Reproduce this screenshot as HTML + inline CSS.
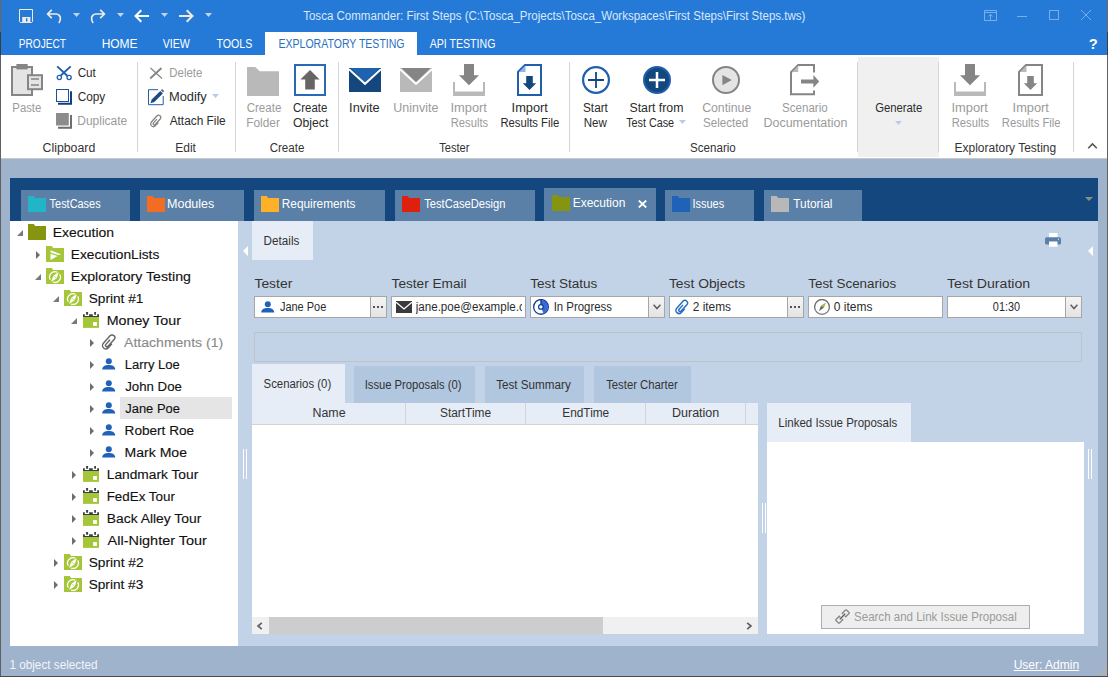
<!DOCTYPE html>
<html lang="en"><head><meta charset="utf-8"><title>Tosca Commander: First Steps</title>
<style>
html,body{margin:0;padding:0}
body{width:1108px;height:677px;position:relative;overflow:hidden;background:#a0b3cc;font-family:"Liberation Sans", sans-serif;}
#app div,#app span,#app svg{position:absolute;display:block}
#app span{white-space:pre}
</style></head>
<body><div id="app">
<div style="left:0px;top:0px;width:1108px;height:55px;background:#257ad8;"></div>
<div style="left:265px;top:32px;width:152px;height:23px;background:#fff;"></div>
<div style="left:0px;top:55px;width:1108px;height:103px;background:#fff;"></div>
<div style="left:0px;top:158px;width:1108px;height:1px;background:#c6c8cb;"></div>
<span style="left:303px;top:7.8px;font-size:12px;line-height:16px;transform:translateX(0.19px) scaleX(0.961);transform-origin:0 0;color:#dbe8f8;">Tosca Commander: First Steps (C:\Tosca_Projects\Tosca_Workspaces\First Steps\First Steps.tws)</span>
<span style="left:18px;top:35.8px;font-size:12px;line-height:16px;transform:translateX(0.80px) scaleX(0.842);transform-origin:0 0;color:#fff;">PROJECT</span>
<span style="left:101px;top:35.8px;font-size:12px;line-height:16px;transform:translateX(0.63px) scaleX(0.999);transform-origin:0 0;color:#fff;">HOME</span>
<span style="left:162px;top:35.8px;font-size:12px;line-height:16px;transform:translateX(0.66px) scaleX(0.889);transform-origin:0 0;color:#fff;">VIEW</span>
<span style="left:216px;top:35.8px;font-size:12px;line-height:16px;transform:translateX(0.40px) scaleX(0.886);transform-origin:0 0;color:#fff;">TOOLS</span>
<span style="left:278px;top:35.8px;font-size:12px;line-height:16px;transform:translateX(0.47px) scaleX(0.878);transform-origin:0 0;color:#2a6fc0;">EXPLORATORY TESTING</span>
<span style="left:429px;top:35.8px;font-size:12px;line-height:16px;transform:translateX(0.67px) scaleX(0.883);transform-origin:0 0;color:#fff;">API TESTING</span>
<span style="left:1088px;top:35.3px;font-size:14px;line-height:18px;font-weight:700;transform:translateX(0.77px) scaleX(1.049);transform-origin:0 0;color:#fff;">?</span>
<svg style="left:18px;top:8px;" width="16" height="16" viewBox="0 0 16 16"><path d="M1.5 1.5h13v12.2l-.8.8H2.3l-.8-.8z" fill="none" stroke="#efeae2" stroke-width="1"/><path d="M4.2 9h8.2v5.5H4.2z" fill="#efeae2"/><rect x="8" y="10.2" width="1.4" height="3.3" fill="#257ad8"/></svg>
<svg style="left:46px;top:8px;" width="16" height="16" viewBox="0 0 16 16"><path d="M5.8 1.8L1.6 6l4.2 4.2M1.8 6h8.4a4.4 4.4 0 0 1 4.2 4.6c0 1.8-.6 3.2-1.6 4.4" fill="none" stroke="#efeae2" stroke-width="1.7"/></svg>
<svg style="left:73px;top:13px;" width="7" height="4" viewBox="0 0 7 4"><path d="M0 0h7l-3.5 4z" fill="#c5d3e8"/></svg>
<svg style="left:90px;top:8px;" width="16" height="16" viewBox="0 0 16 16"><path d="M10.2 1.8L14.4 6l-4.2 4.2M14.2 6H5.8a4.4 4.4 0 0 0-4.2 4.6c0 1.8.6 3.2 1.6 4.4" fill="none" stroke="#efeae2" stroke-width="1.7"/></svg>
<svg style="left:117px;top:13px;" width="7" height="4" viewBox="0 0 7 4"><path d="M0 0h7l-3.5 4z" fill="#c5d3e8"/></svg>
<svg style="left:134px;top:8px;" width="16" height="16" viewBox="0 0 16 16"><path d="M7.3 2.2L1.5 8l5.8 5.800M1.8 8H15" fill="none" stroke="#fff" stroke-width="2"/></svg>
<svg style="left:161px;top:13px;" width="7" height="4" viewBox="0 0 7 4"><path d="M0 0h7l-3.5 4z" fill="#c5d3e8"/></svg>
<svg style="left:178px;top:8px;" width="16" height="16" viewBox="0 0 16 16"><path d="M8.700 2.2L14.5 8l-5.800 5.800M14.2 8H1" fill="none" stroke="#efe9e1" stroke-width="2"/></svg>
<svg style="left:205px;top:13px;" width="7" height="4" viewBox="0 0 7 4"><path d="M0 0h7l-3.5 4z" fill="#c5d3e8"/></svg>
<svg style="left:984px;top:10px;" width="13" height="11" viewBox="0 0 13 11"><path d="M.5.5h12v10H.5zM.5 2.500h12M6.500 4.500v6M4.300 6.500l2.200-2.200 2.200 2.200" fill="none" stroke="#79afe9" stroke-width="1"/></svg>
<div style="left:1017px;top:16px;width:10px;height:1px;background:#79afe9;"></div>
<svg style="left:1049px;top:10px;" width="10" height="10" viewBox="0 0 10 10"><rect x=".5" y=".5" width="9" height="9" fill="none" stroke="#79afe9"/></svg>
<svg style="left:1081px;top:10px;" width="10" height="10" viewBox="0 0 10 10"><path d="M0 0l10 10M10 0L0 10" stroke="#79afe9" stroke-width="1" fill="none"/></svg>
<div style="left:858px;top:57px;width:81px;height:100px;background:#f0f0f0;"></div>
<div style="left:137px;top:62px;width:1px;height:90px;background:#d6d6d6;"></div>
<div style="left:235px;top:62px;width:1px;height:90px;background:#d6d6d6;"></div>
<div style="left:338px;top:62px;width:1px;height:90px;background:#d6d6d6;"></div>
<div style="left:569px;top:62px;width:1px;height:90px;background:#d6d6d6;"></div>
<div style="left:857px;top:62px;width:1px;height:90px;background:#d6d6d6;"></div>
<div style="left:938px;top:62px;width:1px;height:90px;background:#d6d6d6;"></div>
<div style="left:1073px;top:62px;width:1px;height:90px;background:#d6d6d6;"></div>
<span style="left:12px;top:99.8px;font-size:12px;line-height:16px;transform:translateX(0.35px) scaleX(0.943);transform-origin:0 0;color:#9b9b9b;">Paste</span>
<span style="left:77px;top:64.8px;font-size:12px;line-height:16px;transform:translateX(0.63px) scaleX(0.977);transform-origin:0 0;color:#2b2b2b;">Cut</span>
<span style="left:77px;top:88.8px;font-size:12px;line-height:16px;transform:translateX(0.63px) scaleX(0.985);transform-origin:0 0;color:#2b2b2b;">Copy</span>
<span style="left:77px;top:112.8px;font-size:12px;line-height:16px;transform:translateX(0.28px) scaleX(0.999);transform-origin:0 0;color:#9b9b9b;">Duplicate</span>
<span style="left:42px;top:139.8px;font-size:12px;line-height:16px;transform:translateX(0.58px) scaleX(1.025);transform-origin:0 0;color:#333;">Clipboard</span>
<span style="left:169px;top:64.8px;font-size:12px;line-height:16px;transform:translateX(0.35px) scaleX(0.949);transform-origin:0 0;color:#9b9b9b;">Delete</span>
<span style="left:168px;top:88.8px;font-size:12px;line-height:16px;transform:translateX(0.92px) scaleX(1.071);transform-origin:0 0;color:#2b2b2b;">Modify</span>
<span style="left:169px;top:112.8px;font-size:12px;line-height:16px;transform:translateX(0.67px) scaleX(0.987);transform-origin:0 0;color:#2b2b2b;">Attach File</span>
<span style="left:175px;top:139.8px;font-size:12px;line-height:16px;transform:translateX(0.28px) scaleX(1.000);transform-origin:0 0;color:#333;">Edit</span>
<span style="left:246px;top:99.8px;font-size:12px;line-height:16px;transform:translateX(0.64px) scaleX(0.963);transform-origin:0 0;color:#9b9b9b;">Create</span>
<span style="left:246px;top:114.8px;font-size:12px;line-height:16px;transform:translateX(0.29px) scaleX(0.986);transform-origin:0 0;color:#9b9b9b;">Folder</span>
<span style="left:293px;top:99.8px;font-size:12px;line-height:16px;transform:translateX(0.04px) scaleX(0.950);transform-origin:0 0;color:#2b2b2b;">Create</span>
<span style="left:293px;top:114.8px;font-size:12px;line-height:16px;transform:translateX(0.06px) scaleX(1.016);transform-origin:0 0;color:#2b2b2b;">Object</span>
<span style="left:269px;top:139.8px;font-size:12px;line-height:16px;transform:translateX(0.64px) scaleX(0.963);transform-origin:0 0;color:#333;">Create</span>
<span style="left:349px;top:99.8px;font-size:12px;line-height:16px;transform:translateX(0.10px) scaleX(1.067);transform-origin:0 0;color:#2b2b2b;">Invite</span>
<span style="left:393px;top:99.8px;font-size:12px;line-height:16px;transform:translateX(0.31px) scaleX(1.041);transform-origin:0 0;color:#9b9b9b;">Uninvite</span>
<span style="left:450px;top:99.8px;font-size:12px;line-height:16px;transform:translateX(0.51px) scaleX(1.071);transform-origin:0 0;color:#9b9b9b;">Import</span>
<span style="left:450px;top:114.8px;font-size:12px;line-height:16px;transform:translateX(0.77px) scaleX(0.935);transform-origin:0 0;color:#9b9b9b;">Results</span>
<span style="left:511px;top:99.8px;font-size:12px;line-height:16px;transform:translateX(0.59px) scaleX(1.067);transform-origin:0 0;color:#2b2b2b;">Import</span>
<span style="left:500px;top:114.8px;font-size:12px;line-height:16px;transform:translateX(0.38px) scaleX(0.939);transform-origin:0 0;color:#2b2b2b;">Results File</span>
<span style="left:439px;top:139.8px;font-size:12px;line-height:16px;transform:translateX(0.18px) scaleX(0.923);transform-origin:0 0;color:#333;">Tester</span>
<span style="left:583px;top:99.8px;font-size:12px;line-height:16px;transform:translateX(0.00px) scaleX(0.982);transform-origin:0 0;color:#2b2b2b;">Start</span>
<span style="left:583px;top:114.8px;font-size:12px;line-height:16px;transform:translateX(0.69px) scaleX(0.962);transform-origin:0 0;color:#2b2b2b;">New</span>
<span style="left:629px;top:99.8px;font-size:12px;line-height:16px;transform:translateX(0.44px) scaleX(1.025);transform-origin:0 0;color:#2b2b2b;">Start from</span>
<span style="left:626px;top:114.8px;font-size:12px;line-height:16px;transform:translateX(0.18px) scaleX(0.898);transform-origin:0 0;color:#2b2b2b;">Test Case</span>
<span style="left:702px;top:99.8px;font-size:12px;line-height:16px;transform:translateX(0.17px) scaleX(1.022);transform-origin:0 0;color:#9b9b9b;">Continue</span>
<span style="left:703px;top:114.8px;font-size:12px;line-height:16px;transform:translateX(0.04px) scaleX(0.968);transform-origin:0 0;color:#9b9b9b;">Selected</span>
<span style="left:782px;top:99.8px;font-size:12px;line-height:16px;transform:translateX(0.04px) scaleX(0.963);transform-origin:0 0;color:#9b9b9b;">Scenario</span>
<span style="left:763px;top:114.8px;font-size:12px;line-height:16px;transform:translateX(0.49px) scaleX(1.040);transform-origin:0 0;color:#9b9b9b;">Documentation</span>
<span style="left:690px;top:139.8px;font-size:12px;line-height:16px;transform:translateX(0.04px) scaleX(0.966);transform-origin:0 0;color:#333;">Scenario</span>
<span style="left:875px;top:99.8px;font-size:12px;line-height:16px;transform:translateX(0.13px) scaleX(0.942);transform-origin:0 0;color:#2b2b2b;">Generate</span>
<span style="left:951px;top:99.8px;font-size:12px;line-height:16px;transform:translateX(0.51px) scaleX(1.071);transform-origin:0 0;color:#9b9b9b;">Import</span>
<span style="left:951px;top:114.8px;font-size:12px;line-height:16px;transform:translateX(0.77px) scaleX(0.933);transform-origin:0 0;color:#9b9b9b;">Results</span>
<span style="left:1012px;top:99.8px;font-size:12px;line-height:16px;transform:translateX(0.59px) scaleX(1.067);transform-origin:0 0;color:#9b9b9b;">Import</span>
<span style="left:1001px;top:114.8px;font-size:12px;line-height:16px;transform:translateX(0.77px) scaleX(0.939);transform-origin:0 0;color:#9b9b9b;">Results File</span>
<span style="left:954px;top:139.8px;font-size:12px;line-height:16px;transform:translateX(0.54px) scaleX(0.998);transform-origin:0 0;color:#333;">Exploratory Testing</span>
<svg style="left:11px;top:64px;" width="32" height="32" viewBox="0 0 32 32"><rect x="1" y="3" width="20" height="28" fill="#e4e4e4" stroke="#858585" stroke-width="2"/><rect x="5.400" y="0" width="11.200" height="5.400" fill="#858585"/><rect x="17" y="11.200" width="14" height="14" fill="#e4e4e4" stroke="#858585" stroke-width="2"/><path d="M20 15h8M20 21h8" stroke="#858585" stroke-width="1.700"/></svg>
<svg style="left:55px;top:65px;" width="18" height="17" viewBox="0 0 18 17"><path d="M2.200 1.400L12.500 11M15.700 1.400L5.800 10.500" stroke="#1f5fae" stroke-width="1.900" fill="none"/><circle cx="4.300" cy="12.500" r="2.100" fill="none" stroke="#1f5fae" stroke-width="1.300"/><circle cx="14.100" cy="12.500" r="2.100" fill="none" stroke="#1f5fae" stroke-width="1.300"/></svg>
<svg style="left:56px;top:89px;" width="17" height="16" viewBox="0 0 17 16"><rect x=".5" y=".5" width="12" height="12" fill="#fff" stroke="#1f4f99"/><path d="M15 2.300V14.800H2" fill="none" stroke="#0f3f7f" stroke-width="2"/></svg>
<svg style="left:56px;top:113px;" width="17" height="16" viewBox="0 0 17 16"><rect x="0" y="0" width="12.800" height="12.500" fill="#8c8c8c"/><path d="M15 2.100V14.800H2" fill="none" stroke="#6e6e6e" stroke-width="2"/></svg>
<svg style="left:149px;top:67px;" width="14" height="13" viewBox="0 0 14 13"><path d="M1.500 1L13 11.500" stroke="#858585" stroke-width="1.200"/><path d="M12.500 1L1.200 11.500" stroke="#858585" stroke-width="1.900"/></svg>
<svg style="left:147px;top:88px;" width="18" height="18" viewBox="0 0 18 18"><path d="M11 1.700H1.500v15h14.700V8" fill="none" stroke="#1f5fae" stroke-width="1"/><path d="M3.500 15.300l1.200-3.800 8.600-8.600 2.600 2.600-8.600 8.600z" fill="#1a4a86"/><path d="M13.800 2.200l1.300-1.300 2.200 2.200-1.300 1.300z" fill="#6a6a6a"/></svg>
<svg style="left:212px;top:94px;" width="7" height="4" viewBox="0 0 7 4"><path d="M0 0h7l-3.5 4z" fill="#b8cce8"/></svg>
<svg style="left:148px;top:113px;" width="16" height="16" viewBox="0 0 16 16"><g transform="translate(8 8) scale(0.98) rotate(42) translate(-2.800 -7)" fill="none" stroke="#858585" stroke-width="1.3"><path d="M5.600 6.500v4.400a2.800 2.800 0 0 1-5.600 0V2.600a2.300 2.300 0 0 1 4.600 0v7.600a1.200 1.200 0 0 1-2.400 0V5"/></g></svg>
<svg style="left:247px;top:67px;" width="32" height="29" viewBox="0 0 32 29"><path d="M0 0h8.200l4.500 4.200H32V29H0z" fill="#b9b9b9"/></svg>
<svg style="left:294px;top:64px;" width="32" height="32" viewBox="0 0 32 32"><rect x="1" y="1" width="30" height="30" fill="#fff" stroke="#2a68b8" stroke-width="2"/><path d="M16 6l9.600 9.500h-4.800v10.100h-9.600V15.500H6.400z" fill="#666"/></svg>
<svg style="left:349px;top:68px;" width="32" height="24" viewBox="0 0 32 24"><rect width="32" height="24" fill="#15477f"/><path d="M1.500 0H30.5L16.0 14.16z" fill="#1f62b0"/><path d="M0 1.200L16.0 15.84 32 1.200" fill="none" stroke="#fff" stroke-width="2.0"/></svg>
<svg style="left:400px;top:68px;" width="32" height="24" viewBox="0 0 32 24"><rect width="32" height="24" fill="#b9b9b9"/><path d="M1.500 0H30.5L16.0 14.16z" fill="#858585"/><path d="M0 1.200L16.0 15.84 32 1.200" fill="none" stroke="#fff" stroke-width="2.0"/></svg>
<svg style="left:453px;top:64px;" width="32" height="32" viewBox="0 0 32 32"><path d="M0 18h2v9.500h28V18h2v14H0z" fill="#b9b9b9"/><path d="M11 0h10v11.300h5L16 21.300 6 11.300h5z" fill="#858585"/></svg>
<svg style="left:517px;top:64px;" width="25" height="32" viewBox="0 0 25 32"><path d="M8 1H24v30H1V8z" fill="#fff" stroke="#1f5fae" stroke-width="2"/><path d="M2 8h6.500V1.500z" fill="#8fb8e8"/><path d="M9.200 12h6.600v7.300h3.400l-6.700 6.700-6.700-6.700h3.400z" fill="#15477f"/></svg>
<svg style="left:582px;top:66px;" width="28" height="28" viewBox="0 0 28 28"><circle cx="14" cy="14" r="12.900" fill="#fff" stroke="#1f5fae" stroke-width="2.200"/><path d="M6 14h16M14 6v16" stroke="#15477f" stroke-width="1.800"/></svg>
<svg style="left:643px;top:66px;" width="28" height="28" viewBox="0 0 28 28"><circle cx="14" cy="14" r="13" fill="#15477f" stroke="#1f5fae" stroke-width="2"/><path d="M6 14h16M14 6v16" stroke="#fff" stroke-width="2.500"/></svg>
<svg style="left:679px;top:120px;" width="7" height="4" viewBox="0 0 7 4"><path d="M0 0h7l-3.5 4z" fill="#b8cce8"/></svg>
<svg style="left:712px;top:66px;" width="28" height="28" viewBox="0 0 28 28"><circle cx="14" cy="14" r="13" fill="#e4e4e4" stroke="#858585" stroke-width="2"/><path d="M10.400 9v10.200l9.400-5.100z" fill="#858585"/></svg>
<svg style="left:790px;top:64px;" width="30" height="32" viewBox="0 0 30 32"><path d="M24 8.400V1H8.200L1 8.200V30.300H24V26.500" fill="none" stroke="#858585" stroke-width="2"/><path d="M2 8h6.200V1.800z" fill="#b9b9b9"/><path d="M11 15.400h12.400V11l5.800 6.400-5.800 6.300v-4.100H11z" fill="#858585"/></svg>
<svg style="left:895px;top:121px;" width="7" height="4" viewBox="0 0 7 4"><path d="M0 0h7l-3.5 4z" fill="#b8cce8"/></svg>
<svg style="left:954px;top:64px;" width="32" height="32" viewBox="0 0 32 32"><path d="M0 18h2v9.500h28V18h2v14H0z" fill="#b9b9b9"/><path d="M11 0h10v11.300h5L16 21.300 6 11.300h5z" fill="#858585"/></svg>
<svg style="left:1018px;top:64px;" width="25" height="32" viewBox="0 0 25 32"><path d="M8 1H24v30H1V8z" fill="#fff" stroke="#858585" stroke-width="2"/><path d="M2 8h6.500V1.500z" fill="#b9b9b9"/><path d="M9.200 12h6.600v7.300h3.400l-6.700 6.700-6.700-6.700h3.400z" fill="#858585"/></svg>
<svg style="left:1087px;top:142px;" width="11" height="8" viewBox="0 0 11 8"><path d="M1.200 6.300L5.500 2l4.300 4.300" fill="none" stroke="#555" stroke-width="1.600"/></svg>
<div style="left:10px;top:178px;width:1088px;height:43px;background:#15477f;"></div>
<div style="left:21px;top:190px;width:109px;height:31px;background:#5a80a8;"></div>
<svg style="left:28px;top:196px;" width="18" height="16" viewBox="0 0 18 16"><path d="M0 0h5.700l1.500 2H18v14H0z" fill="#22b5c8"/></svg>
<span style="left:49px;top:195.8px;font-size:12px;line-height:16px;transform:translateX(0.61px) scaleX(0.910);transform-origin:0 0;color:#fff;">TestCases</span>
<div style="left:140px;top:190px;width:104px;height:31px;background:#5a80a8;"></div>
<svg style="left:147px;top:196px;" width="18" height="16" viewBox="0 0 18 16"><path d="M0 0h5.700l1.500 2H18v14H0z" fill="#f26d21"/></svg>
<span style="left:166px;top:195.8px;font-size:12px;line-height:16px;transform:translateX(0.97px) scaleX(1.045);transform-origin:0 0;color:#fff;">Modules</span>
<div style="left:254px;top:190px;width:131px;height:31px;background:#5a80a8;"></div>
<svg style="left:261px;top:196px;" width="18" height="16" viewBox="0 0 18 16"><path d="M0 0h5.700l1.500 2H18v14H0z" fill="#fdb128"/></svg>
<span style="left:281px;top:195.8px;font-size:12px;line-height:16px;transform:translateX(0.84px) scaleX(0.984);transform-origin:0 0;color:#fff;">Requirements</span>
<div style="left:395px;top:190px;width:140px;height:31px;background:#5a80a8;"></div>
<svg style="left:402px;top:196px;" width="18" height="16" viewBox="0 0 18 16"><path d="M0 0h5.700l1.500 2H18v14H0z" fill="#e0200f"/></svg>
<span style="left:424px;top:195.8px;font-size:12px;line-height:16px;transform:translateX(0.18px) scaleX(0.931);transform-origin:0 0;color:#fff;">TestCaseDesign</span>
<div style="left:665px;top:190px;width:89px;height:31px;background:#5a80a8;"></div>
<svg style="left:672px;top:196px;" width="18" height="16" viewBox="0 0 18 16"><path d="M0 0h5.700l1.500 2H18v14H0z" fill="#1f62b8"/></svg>
<span style="left:692px;top:195.8px;font-size:12px;line-height:16px;transform:translateX(0.42px) scaleX(0.917);transform-origin:0 0;color:#fff;">Issues</span>
<div style="left:764px;top:190px;width:98px;height:31px;background:#5a80a8;"></div>
<svg style="left:771px;top:196px;" width="18" height="16" viewBox="0 0 18 16"><path d="M0 0h5.700l1.500 2H18v14H0z" fill="#b8b8b8"/></svg>
<span style="left:793px;top:195.8px;font-size:12px;line-height:16px;transform:translateX(0.28px) scaleX(0.989);transform-origin:0 0;color:#fff;">Tutorial</span>
<div style="left:544px;top:188px;width:112px;height:33px;background:#5a80a8;"></div>
<svg style="left:552px;top:195px;" width="18" height="16" viewBox="0 0 18 16"><path d="M0 0h5.700l1.500 2H18v14H0z" fill="#85950f"/></svg>
<span style="left:572px;top:194.8px;font-size:12px;line-height:16px;transform:translateX(0.64px) scaleX(1.001);transform-origin:0 0;color:#fff;">Execution</span>
<svg style="left:638px;top:200px;" width="9" height="8" viewBox="0 0 9 8"><path d="M.8.500l7.400 7M8.200.500l-7.400 7" stroke="#fff" stroke-width="1.800"/></svg>
<svg style="left:1085px;top:197px;" width="8" height="4" viewBox="0 0 8 4"><path d="M0 0h8L4 4z" fill="#8b8d86"/></svg>
<div style="left:10px;top:221px;width:228px;height:425px;background:#fff;"></div>
<div style="left:238px;top:221px;width:860px;height:425px;background:#c3d3e7;"></div>
<div style="left:120px;top:397px;width:112px;height:22px;background:#e5e5e5;"></div>
<span style="left:52px;top:224.7px;font-size:12.3px;line-height:16px;transform:translateX(0.74px) scaleX(1.135);transform-origin:0 0;color:#111;-webkit-text-stroke:0.12px;">Execution</span>
<svg style="left:17px;top:230px;" width="6" height="6" viewBox="0 0 6 6"><path d="M6 0v6H0z" fill="#7a7a7a"/></svg>
<svg style="left:28px;top:224px;" width="18" height="16" viewBox="0 0 18 16"><path d="M0 0h5.700l1.500 2H18v14H0z" fill="#85950f"/></svg>
<span style="left:70px;top:246.7px;font-size:12.3px;line-height:16px;transform:translateX(0.77px) scaleX(1.116);transform-origin:0 0;color:#111;-webkit-text-stroke:0.12px;">ExecutionLists</span>
<svg style="left:36px;top:251px;" width="4" height="8" viewBox="0 0 4 8"><path d="M0 0l4 4-4 4z" fill="#6e6e6e"/></svg>
<svg style="left:46px;top:246px;" width="18" height="16" viewBox="0 0 18 16"><path d="M0 0h5.700l1.500 2H18v14H0z" fill="#a5c638"/><path d="M4.500 4.300l10.300 4-10.300 5.800z" fill="#fff"/><path d="M3.500 6.900l9.800 3" stroke="#a5c638" stroke-width="1.100"/></svg>
<span style="left:70px;top:268.7px;font-size:12.3px;line-height:16px;transform:translateX(0.70px) scaleX(1.152);transform-origin:0 0;color:#111;-webkit-text-stroke:0.12px;">Exploratory Testing</span>
<svg style="left:35px;top:274px;" width="6" height="6" viewBox="0 0 6 6"><path d="M6 0v6H0z" fill="#7a7a7a"/></svg>
<svg style="left:46px;top:268px;" width="18" height="16" viewBox="0 0 18 16"><path d="M0 0h5.700l1.500 2H18v14H0z" fill="#a5c638"/><path d="M4.320 11.750A5.400 5.400 0 0 1 11.200 4.110M13.720 6.430A5.400 5.400 0 0 1 7.070 14.090" fill="none" stroke="#fff" stroke-width="1.300"/><path d="M12.800 4L10.800 10.300 5 14 7.300 7.800z" fill="#fff"/><path d="M7.300 7.800L10.800 10.300" stroke="#a5c638" stroke-width=".6"/></svg>
<span style="left:88px;top:290.7px;font-size:12.3px;line-height:16px;transform:translateX(0.69px) scaleX(1.110);transform-origin:0 0;color:#111;-webkit-text-stroke:0.12px;">Sprint #1</span>
<svg style="left:53px;top:296px;" width="6" height="6" viewBox="0 0 6 6"><path d="M6 0v6H0z" fill="#7a7a7a"/></svg>
<svg style="left:64px;top:290px;" width="18" height="16" viewBox="0 0 18 16"><path d="M0 0h5.700l1.500 2H18v14H0z" fill="#a5c638"/><path d="M4.320 11.750A5.400 5.400 0 0 1 11.200 4.110M13.720 6.430A5.400 5.400 0 0 1 7.070 14.090" fill="none" stroke="#fff" stroke-width="1.300"/><path d="M12.800 4L10.800 10.300 5 14 7.300 7.800z" fill="#fff"/><path d="M7.300 7.800L10.800 10.300" stroke="#a5c638" stroke-width=".6"/></svg>
<span style="left:106px;top:312.7px;font-size:12.3px;line-height:16px;transform:translateX(0.68px) scaleX(1.159);transform-origin:0 0;color:#111;-webkit-text-stroke:0.12px;">Money Tour</span>
<svg style="left:71px;top:318px;" width="6" height="6" viewBox="0 0 6 6"><path d="M6 0v6H0z" fill="#7a7a7a"/></svg>
<svg style="left:83px;top:312px;" width="16.2" height="16" viewBox="0 0 16.2 16"><rect y="4.900" width="16.100" height="11" fill="#a5c638"/><path d="M0 4.900V2.200h1.800V4h4.300V2.200h3.700V4h4.400V2.200h1.900v2.700zM3.100.100h2v2.600h-2zM11.200.100h1.800v2.600h-1.800z" fill="#3a3f4a"/><rect x="10.050" y="10.100" width="3.900" height="3.800" fill="#fff"/></svg>
<span style="left:124px;top:334.7px;font-size:12.3px;line-height:16px;transform:translateX(0.10px) scaleX(1.141);transform-origin:0 0;color:#8a8a8a;-webkit-text-stroke:0.12px;">Attachments (1)</span>
<svg style="left:90px;top:339px;" width="4" height="8" viewBox="0 0 4 8"><path d="M0 0l4 4-4 4z" fill="#6e6e6e"/></svg>
<svg style="left:101px;top:333.6px;" width="16" height="16" viewBox="0 0 16 16"><g transform="translate(8 8) scale(1.2) rotate(42) translate(-2.800 -7)" fill="none" stroke="#666" stroke-width="1.2"><path d="M5.600 6.500v4.400a2.800 2.800 0 0 1-5.600 0V2.600a2.300 2.300 0 0 1 4.600 0v7.600a1.200 1.200 0 0 1-2.400 0V5"/></g></svg>
<span style="left:124px;top:356.7px;font-size:12.3px;line-height:16px;transform:translateX(0.71px) scaleX(1.061);transform-origin:0 0;color:#111;-webkit-text-stroke:0.12px;">Larry Loe</span>
<svg style="left:90px;top:361px;" width="4" height="8" viewBox="0 0 4 8"><path d="M0 0l4 4-4 4z" fill="#6e6e6e"/></svg>
<svg style="left:102px;top:358px;" width="14" height="12" viewBox="0 0 14 12"><circle cx="6.800" cy="3.300" r="3" fill="#1f62b8"/><path d="M.200 11.500c0-3 2.900-4.400 6.500-4.400s6.500 1.400 6.500 4.400z" fill="#1f62b8"/></svg>
<span style="left:125px;top:378.7px;font-size:12.3px;line-height:16px;transform:translateX(0.24px) scaleX(1.076);transform-origin:0 0;color:#111;-webkit-text-stroke:0.12px;">John Doe</span>
<svg style="left:90px;top:383px;" width="4" height="8" viewBox="0 0 4 8"><path d="M0 0l4 4-4 4z" fill="#6e6e6e"/></svg>
<svg style="left:102px;top:380px;" width="14" height="12" viewBox="0 0 14 12"><circle cx="6.800" cy="3.300" r="3" fill="#1f62b8"/><path d="M.200 11.500c0-3 2.900-4.400 6.500-4.400s6.500 1.400 6.500 4.400z" fill="#1f62b8"/></svg>
<span style="left:125px;top:400.7px;font-size:12.3px;line-height:16px;transform:translateX(0.26px) scaleX(1.052);transform-origin:0 0;color:#111;-webkit-text-stroke:0.12px;">Jane Poe</span>
<svg style="left:90px;top:405px;" width="4" height="8" viewBox="0 0 4 8"><path d="M0 0l4 4-4 4z" fill="#6e6e6e"/></svg>
<svg style="left:102px;top:402px;" width="14" height="12" viewBox="0 0 14 12"><circle cx="6.800" cy="3.300" r="3" fill="#1f62b8"/><path d="M.200 11.500c0-3 2.900-4.400 6.500-4.400s6.500 1.400 6.500 4.400z" fill="#1f62b8"/></svg>
<span style="left:124px;top:422.7px;font-size:12.3px;line-height:16px;transform:translateX(0.61px) scaleX(1.105);transform-origin:0 0;color:#111;-webkit-text-stroke:0.12px;">Robert Roe</span>
<svg style="left:90px;top:427px;" width="4" height="8" viewBox="0 0 4 8"><path d="M0 0l4 4-4 4z" fill="#6e6e6e"/></svg>
<svg style="left:102px;top:424px;" width="14" height="12" viewBox="0 0 14 12"><circle cx="6.800" cy="3.300" r="3" fill="#1f62b8"/><path d="M.200 11.500c0-3 2.900-4.400 6.500-4.400s6.500 1.400 6.500 4.400z" fill="#1f62b8"/></svg>
<span style="left:124px;top:444.7px;font-size:12.3px;line-height:16px;transform:translateX(0.55px) scaleX(1.142);transform-origin:0 0;color:#111;-webkit-text-stroke:0.12px;">Mark Moe</span>
<svg style="left:90px;top:449px;" width="4" height="8" viewBox="0 0 4 8"><path d="M0 0l4 4-4 4z" fill="#6e6e6e"/></svg>
<svg style="left:102px;top:446px;" width="14" height="12" viewBox="0 0 14 12"><circle cx="6.800" cy="3.300" r="3" fill="#1f62b8"/><path d="M.200 11.500c0-3 2.900-4.400 6.500-4.400s6.500 1.400 6.500 4.400z" fill="#1f62b8"/></svg>
<span style="left:106px;top:466.7px;font-size:12.3px;line-height:16px;transform:translateX(0.77px) scaleX(1.118);transform-origin:0 0;color:#111;-webkit-text-stroke:0.12px;">Landmark Tour</span>
<svg style="left:72px;top:471px;" width="4" height="8" viewBox="0 0 4 8"><path d="M0 0l4 4-4 4z" fill="#6e6e6e"/></svg>
<svg style="left:83px;top:466px;" width="16.2" height="16" viewBox="0 0 16.2 16"><rect y="4.900" width="16.100" height="11" fill="#a5c638"/><path d="M0 4.900V2.200h1.800V4h4.300V2.200h3.700V4h4.400V2.200h1.900v2.700zM3.100.100h2v2.600h-2zM11.200.100h1.800v2.600h-1.800z" fill="#3a3f4a"/><rect x="10.050" y="10.100" width="3.900" height="3.800" fill="#fff"/></svg>
<span style="left:106px;top:488.7px;font-size:12.3px;line-height:16px;transform:translateX(0.64px) scaleX(1.089);transform-origin:0 0;color:#111;-webkit-text-stroke:0.12px;">FedEx Tour</span>
<svg style="left:72px;top:493px;" width="4" height="8" viewBox="0 0 4 8"><path d="M0 0l4 4-4 4z" fill="#6e6e6e"/></svg>
<svg style="left:83px;top:488px;" width="16.2" height="16" viewBox="0 0 16.2 16"><rect y="4.900" width="16.100" height="11" fill="#a5c638"/><path d="M0 4.900V2.200h1.800V4h4.300V2.200h3.700V4h4.400V2.200h1.900v2.700zM3.100.100h2v2.600h-2zM11.200.100h1.800v2.600h-1.800z" fill="#3a3f4a"/><rect x="10.050" y="10.100" width="3.900" height="3.800" fill="#fff"/></svg>
<span style="left:106px;top:510.7px;font-size:12.3px;line-height:16px;transform:translateX(0.75px) scaleX(1.127);transform-origin:0 0;color:#111;-webkit-text-stroke:0.12px;">Back Alley Tour</span>
<svg style="left:72px;top:515px;" width="4" height="8" viewBox="0 0 4 8"><path d="M0 0l4 4-4 4z" fill="#6e6e6e"/></svg>
<svg style="left:83px;top:510px;" width="16.2" height="16" viewBox="0 0 16.2 16"><rect y="4.900" width="16.100" height="11" fill="#a5c638"/><path d="M0 4.900V2.200h1.800V4h4.300V2.200h3.700V4h4.400V2.200h1.900v2.700zM3.100.100h2v2.600h-2zM11.200.100h1.800v2.600h-1.800z" fill="#3a3f4a"/><rect x="10.050" y="10.100" width="3.900" height="3.800" fill="#fff"/></svg>
<span style="left:107px;top:532.7px;font-size:12.3px;line-height:16px;transform:translateX(0.60px) scaleX(1.174);transform-origin:0 0;color:#111;-webkit-text-stroke:0.12px;">All-Nighter Tour</span>
<svg style="left:72px;top:537px;" width="4" height="8" viewBox="0 0 4 8"><path d="M0 0l4 4-4 4z" fill="#6e6e6e"/></svg>
<svg style="left:83px;top:532px;" width="16.2" height="16" viewBox="0 0 16.2 16"><rect y="4.900" width="16.100" height="11" fill="#a5c638"/><path d="M0 4.900V2.200h1.800V4h4.300V2.200h3.700V4h4.400V2.200h1.900v2.700zM3.100.100h2v2.600h-2zM11.200.100h1.800v2.600h-1.800z" fill="#3a3f4a"/><rect x="10.050" y="10.100" width="3.900" height="3.800" fill="#fff"/></svg>
<span style="left:88px;top:554.7px;font-size:12.3px;line-height:16px;transform:translateX(0.69px) scaleX(1.115);transform-origin:0 0;color:#111;-webkit-text-stroke:0.12px;">Sprint #2</span>
<svg style="left:54px;top:559px;" width="4" height="8" viewBox="0 0 4 8"><path d="M0 0l4 4-4 4z" fill="#6e6e6e"/></svg>
<svg style="left:64px;top:554px;" width="18" height="16" viewBox="0 0 18 16"><path d="M0 0h5.700l1.500 2H18v14H0z" fill="#a5c638"/><path d="M4.320 11.750A5.400 5.400 0 0 1 11.200 4.110M13.720 6.430A5.400 5.400 0 0 1 7.070 14.090" fill="none" stroke="#fff" stroke-width="1.300"/><path d="M12.800 4L10.800 10.300 5 14 7.300 7.800z" fill="#fff"/><path d="M7.300 7.800L10.800 10.300" stroke="#a5c638" stroke-width=".6"/></svg>
<span style="left:88px;top:576.7px;font-size:12.3px;line-height:16px;transform:translateX(0.69px) scaleX(1.109);transform-origin:0 0;color:#111;-webkit-text-stroke:0.12px;">Sprint #3</span>
<svg style="left:54px;top:581px;" width="4" height="8" viewBox="0 0 4 8"><path d="M0 0l4 4-4 4z" fill="#6e6e6e"/></svg>
<svg style="left:64px;top:576px;" width="18" height="16" viewBox="0 0 18 16"><path d="M0 0h5.700l1.500 2H18v14H0z" fill="#a5c638"/><path d="M4.320 11.750A5.400 5.400 0 0 1 11.200 4.110M13.720 6.430A5.400 5.400 0 0 1 7.070 14.090" fill="none" stroke="#fff" stroke-width="1.300"/><path d="M12.800 4L10.800 10.300 5 14 7.300 7.800z" fill="#fff"/><path d="M7.300 7.800L10.800 10.300" stroke="#a5c638" stroke-width=".6"/></svg>
<div style="left:252px;top:221px;width:61px;height:39px;background:#e6edf6;"></div>
<span style="left:263px;top:232.8px;font-size:12px;line-height:16px;transform:translateX(0.59px) scaleX(0.975);transform-origin:0 0;color:#333;">Details</span>
<span style="left:254px;top:276.3px;font-size:12.3px;line-height:16px;transform:translateX(0.44px) scaleX(1.130);transform-origin:0 0;color:#333;">Tester</span>
<span style="left:391px;top:276.3px;font-size:12.3px;line-height:16px;transform:translateX(0.58px) scaleX(1.109);transform-origin:0 0;color:#333;">Tester Email</span>
<span style="left:530px;top:276.3px;font-size:12.3px;line-height:16px;transform:translateX(0.28px) scaleX(1.103);transform-origin:0 0;color:#333;">Test Status</span>
<span style="left:668px;top:276.3px;font-size:12.3px;line-height:16px;transform:translateX(0.91px) scaleX(1.126);transform-origin:0 0;color:#333;">Test Objects</span>
<span style="left:808px;top:276.3px;font-size:12.3px;line-height:16px;transform:translateX(0.25px) scaleX(1.089);transform-origin:0 0;color:#333;">Test Scenarios</span>
<span style="left:946px;top:276.3px;font-size:12.3px;line-height:16px;transform:translateX(0.98px) scaleX(1.148);transform-origin:0 0;color:#333;">Test Duration</span>
<div style="left:254px;top:296px;width:133px;height:22px;background:#fff;box-sizing:border-box;border:1px solid #a6a6a6"></div>
<div style="left:370px;top:296px;width:17px;height:22px;background:linear-gradient(#f5f5f5,#e3e3e3);box-sizing:border-box;border:1px solid #a6a6a6"></div>
<div style="left:391px;top:296px;width:135px;height:22px;background:#fff;box-sizing:border-box;border:1px solid #a6a6a6"></div>
<div style="left:530px;top:296px;width:135px;height:22px;background:#fff;box-sizing:border-box;border:1px solid #a6a6a6"></div>
<div style="left:648px;top:296px;width:17px;height:22px;background:linear-gradient(#f5f5f5,#e3e3e3);box-sizing:border-box;border:1px solid #a6a6a6"></div>
<div style="left:669px;top:296px;width:135px;height:22px;background:#fff;box-sizing:border-box;border:1px solid #a6a6a6"></div>
<div style="left:787px;top:296px;width:17px;height:22px;background:linear-gradient(#f5f5f5,#e3e3e3);box-sizing:border-box;border:1px solid #a6a6a6"></div>
<div style="left:808px;top:296px;width:135px;height:22px;background:#fff;box-sizing:border-box;border:1px solid #a6a6a6"></div>
<div style="left:947px;top:296px;width:135px;height:22px;background:#fff;box-sizing:border-box;border:1px solid #a6a6a6"></div>
<div style="left:1065px;top:296px;width:17px;height:22px;background:linear-gradient(#f5f5f5,#e3e3e3);box-sizing:border-box;border:1px solid #a6a6a6"></div>
<span style="left:279px;top:298.8px;font-size:12px;line-height:16px;transform:translateX(0.93px) scaleX(0.913);transform-origin:0 0;color:#2b2b2b;">Jane Poe</span>
<span style="left:415px;top:298.8px;font-size:12px;line-height:16px;transform:translateX(0.74px) scaleX(0.965);transform-origin:0 0;color:#2b2b2b;clip-path:polygon(0 0,110.1px 0,110.1px 100%,0 100%);">jane.poe@example.com</span>
<span style="left:553px;top:298.8px;font-size:12px;line-height:16px;transform:translateX(0.63px) scaleX(0.951);transform-origin:0 0;color:#2b2b2b;">In Progress</span>
<span style="left:692px;top:298.8px;font-size:12px;line-height:16px;transform:translateX(0.77px) scaleX(0.990);transform-origin:0 0;color:#2b2b2b;">2 items</span>
<span style="left:833px;top:298.8px;font-size:12px;line-height:16px;transform:translateX(0.78px) scaleX(0.999);transform-origin:0 0;color:#2b2b2b;">0 items</span>
<span style="left:992px;top:298.8px;font-size:12px;line-height:16px;transform:translateX(0.84px) scaleX(0.906);transform-origin:0 0;color:#2b2b2b;">01:30</span>
<div style="left:254px;top:332px;width:828px;height:30px;background:transparent;box-sizing:border-box;border:1px solid #bcc3cb"></div>
<svg style="left:261px;top:301px;" width="14" height="12" viewBox="0 0 14 12"><circle cx="6.800" cy="3.300" r="3" fill="#1f62b8"/><path d="M.200 11.500c0-3 2.900-4.400 6.500-4.400s6.500 1.400 6.500 4.400z" fill="#1f62b8"/></svg>
<svg style="left:396px;top:301px;" width="16" height="12" viewBox="0 0 16 12"><rect width="16" height="12" fill="#3a3a3a"/><path d="M1.500 0H14.5L8.0 7.08z" fill="#3a3a3a"/><path d="M0 1.200L8.0 7.92 16 1.200" fill="none" stroke="#fff" stroke-width="1.4"/></svg>
<svg style="left:533px;top:299px;" width="17" height="16" viewBox="0 0 17 16"><circle cx="8" cy="7.900" r="7.350" fill="#fff" stroke="#0a3a9a" stroke-width="1.300"/><path d="M8 7.900V.900A7 7 0 0 1 10.390 14.480z" fill="#3a6ad0"/><path d="M8 .900V7.900" stroke="#0a3a9a" stroke-width="1.400"/><circle cx="7.900" cy="7.900" r="2.300" fill="#fff" stroke="#0a3a9a" stroke-width="1.200"/></svg>
<svg style="left:674.3px;top:299.1px;" width="16" height="16" viewBox="0 0 16 16"><g transform="translate(8 8) scale(1.13) rotate(42) translate(-2.800 -7)" fill="none" stroke="#2a6fc0" stroke-width="1.3"><path d="M5.600 6.500v4.400a2.800 2.800 0 0 1-5.600 0V2.600a2.300 2.300 0 0 1 4.600 0v7.600a1.200 1.200 0 0 1-2.400 0V5"/></g></svg>
<svg style="left:814px;top:299px;" width="17" height="16" viewBox="0 0 17 16"><circle cx="8" cy="7.900" r="7.400" fill="#fff" stroke="#6c7176" stroke-width="1.300"/><path d="M11.900 3.600L10.100 8.600 6.900 6.700z" fill="#9fbd2c"/><path d="M4.900 12.300L6.900 6.700 10.100 8.600z" fill="#6a6a72"/></svg>
<div style="left:372.5px;top:306px;width:2px;height:2px;background:#555;"></div>
<div style="left:376.5px;top:306px;width:2px;height:2px;background:#555;"></div>
<div style="left:380.5px;top:306px;width:2px;height:2px;background:#555;"></div>
<div style="left:789.5px;top:306px;width:2px;height:2px;background:#555;"></div>
<div style="left:793.5px;top:306px;width:2px;height:2px;background:#555;"></div>
<div style="left:797.5px;top:306px;width:2px;height:2px;background:#555;"></div>
<svg style="left:653px;top:304px;" width="8" height="6" viewBox="0 0 8 6"><path d="M.6.800L4 4.600 7.400.800" fill="none" stroke="#5e5e5e" stroke-width="1.500"/></svg>
<svg style="left:1070px;top:304px;" width="8" height="6" viewBox="0 0 8 6"><path d="M.6.800L4 4.600 7.400.800" fill="none" stroke="#5e5e5e" stroke-width="1.500"/></svg>
<svg style="left:1045px;top:232.5px;" width="16" height="14" viewBox="0 0 16 14"><rect x="4" y="0" width="8.500" height="5" fill="#fff"/><rect x="0" y="4.200" width="16" height="7.400" rx="1.600" fill="#5a7fa8"/><rect x="4" y="8.500" width="8.500" height="5.200" fill="#fff"/><rect x="13" y="5.700" width="1" height="1" fill="#fff"/></svg>
<div style="left:252px;top:364px;width:93px;height:39px;background:#e6edf6;"></div>
<div style="left:354px;top:366px;width:121px;height:37px;background:#b1c6df;"></div>
<div style="left:485px;top:366px;width:99px;height:37px;background:#b1c6df;"></div>
<div style="left:594px;top:366px;width:97px;height:37px;background:#b1c6df;"></div>
<span style="left:263px;top:376.1px;font-size:12px;line-height:16px;transform:translateX(0.54px) scaleX(0.948);transform-origin:0 0;color:#333;">Scenarios (0)</span>
<span style="left:364px;top:376.8px;font-size:12px;line-height:16px;transform:translateX(0.65px) scaleX(0.936);transform-origin:0 0;color:#333;">Issue Proposals (0)</span>
<span style="left:496px;top:376.8px;font-size:12px;line-height:16px;transform:translateX(0.19px) scaleX(0.972);transform-origin:0 0;color:#333;">Test Summary</span>
<span style="left:606px;top:376.8px;font-size:12px;line-height:16px;transform:translateX(0.18px) scaleX(0.941);transform-origin:0 0;color:#333;">Tester Charter</span>
<div style="left:252px;top:403px;width:506px;height:231px;background:#fff;"></div>
<div style="left:252px;top:403px;width:506px;height:21px;background:#e6edf6;"></div>
<div style="left:252px;top:424px;width:506px;height:1px;background:#d3d3d1;"></div>
<div style="left:405px;top:403px;width:1px;height:21px;background:#d3d3d1;"></div>
<div style="left:525px;top:403px;width:1px;height:21px;background:#d3d3d1;"></div>
<div style="left:645px;top:403px;width:1px;height:21px;background:#d3d3d1;"></div>
<div style="left:745px;top:403px;width:1px;height:21px;background:#d3d3d1;"></div>
<span style="left:312px;top:404.8px;font-size:12px;line-height:16px;transform:translateX(0.49px) scaleX(1.034);transform-origin:0 0;color:#333;">Name</span>
<span style="left:439px;top:404.8px;font-size:12px;line-height:16px;transform:translateX(1.00px) scaleX(0.991);transform-origin:0 0;color:#333;">StartTime</span>
<span style="left:562px;top:404.8px;font-size:12px;line-height:16px;transform:translateX(0.29px) scaleX(0.986);transform-origin:0 0;color:#333;">EndTime</span>
<span style="left:671px;top:404.8px;font-size:12px;line-height:16px;transform:translateX(0.97px) scaleX(1.043);transform-origin:0 0;color:#333;">Duration</span>
<div style="left:252px;top:617px;width:506px;height:17px;background:#f0f0f0;"></div>
<div style="left:269px;top:617px;width:334px;height:17px;background:#cdcdcd;"></div>
<div style="left:767px;top:403px;width:144px;height:39px;background:#e6edf6;"></div>
<span style="left:778px;top:414.8px;font-size:12px;line-height:16px;transform:translateX(0.34px) scaleX(0.959);transform-origin:0 0;color:#333;">Linked Issue Proposals</span>
<div style="left:767px;top:442px;width:317px;height:192px;background:#fff;"></div>
<div style="left:821px;top:605px;width:209px;height:24px;background:#eeeeee;box-sizing:border-box;border:1px solid #adadad"></div>
<span style="left:854px;top:608.8px;font-size:12px;line-height:16px;transform:translateX(0.04px) scaleX(0.960);transform-origin:0 0;color:#9a9a9a;">Search and Link Issue Proposal</span>
<svg style="left:243px;top:246px;" width="5" height="10" viewBox="0 0 5 10"><path d="M5 0v10L0 5z" fill="#fff"/></svg>
<svg style="left:1088px;top:246px;" width="5" height="10" viewBox="0 0 5 10"><path d="M5 0v10L0 5z" fill="#fff"/></svg>
<div style="left:243px;top:449px;width:1px;height:30px;background:#fff;"></div>
<div style="left:246px;top:449px;width:1px;height:30px;background:#fff;"></div>
<div style="left:1088px;top:449px;width:1px;height:30px;background:#fff;"></div>
<div style="left:1091px;top:449px;width:1px;height:30px;background:#fff;"></div>
<div style="left:762px;top:503px;width:1px;height:30px;background:#fff;"></div>
<div style="left:765px;top:503px;width:1px;height:30px;background:#fff;"></div>
<svg style="left:256px;top:622px;" width="7" height="8" viewBox="0 0 7 8"><path d="M5.800.800L2 4l3.800 3.200" fill="none" stroke="#606060" stroke-width="1.700"/></svg>
<svg style="left:746px;top:622px;" width="7" height="8" viewBox="0 0 7 8"><path d="M1.200.800L5 4 1.200 7.200" fill="none" stroke="#606060" stroke-width="1.700"/></svg>
<svg style="left:833.6px;top:608.45px;" width="17" height="17" viewBox="0 0 17 17"><g transform="translate(8.500 8.500) rotate(-45)" fill="none" stroke="#858585" stroke-width="1.250"><path d="M-2.100-1.300V-2.500H-6.750a.700.700 0 0 0-.7.700V1.800a.700.700 0 0 0 .700.700H-2.100V1.300"/><path d="M2.100-1.300V-2.500H6.750a.700.700 0 0 1 .700.700V1.800a.700.700 0 0 1-.700.700H2.100V1.300"/><path d="M-3.800 0H3.800" stroke="#5a5a5a" stroke-width="1.300"/></g></svg>
<div style="left:1104px;top:666px;width:2px;height:2px;background:#b4b1a8;"></div>
<div style="left:1101px;top:669px;width:2px;height:2px;background:#b4b1a8;"></div>
<div style="left:1104px;top:669px;width:2px;height:2px;background:#b4b1a8;"></div>
<div style="left:1098px;top:672px;width:2px;height:2px;background:#b4b1a8;"></div>
<div style="left:1101px;top:672px;width:2px;height:2px;background:#b4b1a8;"></div>
<div style="left:1104px;top:672px;width:2px;height:2px;background:#b4b1a8;"></div>
<span style="left:9px;top:656.8px;font-size:12px;line-height:16px;transform:translateX(0.40px) scaleX(0.978);transform-origin:0 0;color:#f1f5fa;">1 object selected</span>
<span style="left:1013px;top:656.6px;font-size:12px;line-height:16px;transform:translateX(0.63px) scaleX(1.003);transform-origin:0 0;color:#fff;text-decoration:underline;">User: Admin</span>
<div style="left:0px;top:0px;width:1px;height:32px;background:#6e665a;"></div>
<div style="left:0px;top:32px;width:1px;height:23px;background:#3c3c3c;"></div>
<div style="left:0px;top:55px;width:1px;height:622px;background:#606060;"></div>
<div style="left:1107px;top:0px;width:1px;height:32px;background:#6e665a;"></div>
<div style="left:1107px;top:32px;width:1px;height:23px;background:#3c3c3c;"></div>
<div style="left:1107px;top:55px;width:1px;height:622px;background:#606060;"></div>
<div style="left:0px;top:676px;width:1108px;height:1px;background:#4a4a4a;"></div>
</div></body></html>
